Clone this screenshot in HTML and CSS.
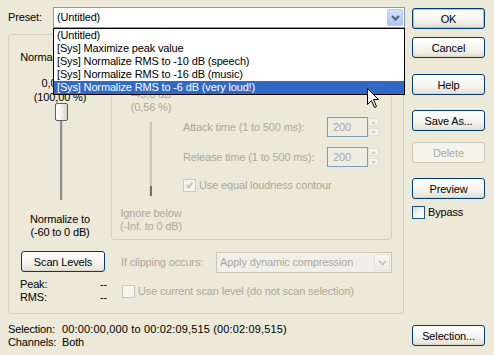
FILE: index.html
```html
<!DOCTYPE html>
<html>
<head>
<meta charset="utf-8">
<link rel="stylesheet" href="styles.css">
</head>
<body>
<div class="dialog">
  <div class="main">
    <div class="preset-row">
      <span class="preset-label">Preset:</span>
      <div class="combo-wrap">
        <div class="combo">
          <span class="combo-text">(Untitled)</span>
          <span class="drop-btn"><svg width="9" height="6" viewBox="0 0 9 6"><path d="M1 1 L4.5 4.5 L8 1" fill="none" stroke="#4D6185" stroke-width="2"/></svg></span>
        </div>
        <ul class="droplist">
          <li>(Untitled)</li>
          <li>[Sys] Maximize peak value</li>
          <li>[Sys] Normalize RMS to -10 dB (speech)</li>
          <li>[Sys] Normalize RMS to -16 dB (music)</li>
          <li class="sel">[Sys] Normalize RMS to -6 dB (very loud!)</li>
        </ul>
      </div>
    </div>

    <div class="group outer">
      <div class="left-col">
        <div class="lbl l-using">Normalize using:</div>
        <div class="lbl l-db">0,00 dB</div>
        <div class="lbl l-pct">(100,00 %)</div>
        <div class="vslider">
          <div class="thumb"></div>
          <div class="track"></div>
        </div>
        <div class="lbl l-to">Normalize to</div>
        <div class="lbl">(-60 to 0 dB)</div>
      </div>

      <div class="group inner">
        <div class="inner-left">
          <div class="lbl dis l-ign-db">-45,0 dB</div>
          <div class="lbl dis">(0,56 %)</div>
          <div class="dslider"><div class="dthumb"></div></div>
          <div class="lbl dis l-ignore">Ignore below</div>
          <div class="lbl dis">(-Inf. to 0 dB)</div>
        </div>
        <div class="inner-right">
          <div class="field-row attack">
            <span class="field-label dis">Attack time (1 to 500 ms):</span>
            <span class="input dis">200</span>
            <span class="spin"><span class="spin-up"><svg width="5" height="3" viewBox="0 0 5 3"><path d="M0 3 L2.5 0 L5 3 Z" fill="#CFCDC2"/></svg></span><span class="spin-down"><svg width="5" height="3" viewBox="0 0 5 3"><path d="M0 0 L2.5 3 L5 0 Z" fill="#CFCDC2"/></svg></span></span>
          </div>
          <div class="field-row release">
            <span class="field-label dis">Release time (1 to 500 ms):</span>
            <span class="input dis">200</span>
            <span class="spin"><span class="spin-up"><svg width="5" height="3" viewBox="0 0 5 3"><path d="M0 3 L2.5 0 L5 3 Z" fill="#CFCDC2"/></svg></span><span class="spin-down"><svg width="5" height="3" viewBox="0 0 5 3"><path d="M0 0 L2.5 3 L5 0 Z" fill="#CFCDC2"/></svg></span></span>
          </div>
          <div class="check-row loud">
            <span class="cb cb-dis"><svg width="11" height="11" viewBox="0 0 11 11"><path d="M2.5 5 L4.5 7.5 L8.5 2.5" fill="none" stroke="#C4C2B6" stroke-width="2"/></svg></span>
            <span class="dis">Use equal loudness contour</span>
          </div>
        </div>
      </div>

      <div class="scan-col">
        <button class="btn scan">Scan Levels</button>
        <div class="levels">
          <span>Peak:</span><span>--</span>
          <span>RMS:</span><span>--</span>
        </div>
      </div>

      <div class="clip-col">
        <div class="clip-row">
          <span class="clip-label dis">If clipping occurs:</span>
          <div class="combo combo-dis">
            <span class="combo-text dis">Apply dynamic compression</span>
            <span class="drop-btn drop-dis"><svg width="9" height="6" viewBox="0 0 9 6"><path d="M1 1 L4.5 4.5 L8 1" fill="none" stroke="#C9C7BA" stroke-width="2"/></svg></span>
          </div>
        </div>
        <div class="check-row scanlvl">
          <span class="cb cb-dis"></span>
          <span class="dis">Use current scan level (do not scan selection)</span>
        </div>
      </div>
    </div>

    <div class="info">
      <div class="info-row"><span class="info-k">Selection:</span><span class="tc">00:00:00,000 to 00:02:09,515 (00:02:09,515)</span></div>
      <div class="info-row"><span class="info-k">Channels:</span><span>Both</span></div>
    </div>
  </div>

  <div class="side">
    <button class="btn ok">OK</button>
    <button class="btn cancel">Cancel</button>
    <button class="btn help">Help</button>
    <button class="btn saveas">Save As...</button>
    <button class="btn delete" disabled>Delete</button>
    <button class="btn preview">Preview</button>
    <div class="bypass"><span class="cb cb-on"></span><span>Bypass</span></div>
    <button class="btn selection">Selection...</button>
  </div>
</div>

<svg class="cursor" width="13" height="21" viewBox="0 0 13 21">
  <path d="M0.5 0.5 L0.5 16.5 L4.5 12.5 L7.5 19.5 L9.5 18.5 L6.5 11.5 L11.5 11.5 Z" fill="#fff" stroke="#000" stroke-width="1" stroke-linejoin="miter"/>
</svg>
</body>
</html>
```

FILE: styles.css
```css
html, body {
  margin: 0;
  padding: 0;
}
body {
  background: #ECE9D8;
  font-family: "Liberation Sans", Arial, sans-serif;
  font-size: 11px;
  line-height: 13px;
  color: #000;
  letter-spacing: -0.15px;
  width: 494px;
  height: 355px;
  overflow: hidden;
}
.dis { color: #ACA899; }

.dialog {
  display: grid;
  grid-template-columns: 396px 73px;
  column-gap: 8px;
  padding: 7px 0 0 8px;
  height: 355px;
  box-sizing: border-box;
}
.main {
  display: flex;
  flex-direction: column;
}

/* preset row */
.preset-row {
  display: flex;
  align-items: center;
  height: 21px;
}
.preset-label { width: 45px; flex: none; }
.combo-wrap {
  position: relative;
  width: 352px;
  flex: none;
}
.combo {
  display: flex;
  align-items: center;
  height: 21px;
  box-sizing: border-box;
  border: 1px solid #7F9DB9;
  background: #fff;
}
.combo-text {
  padding-left: 3px;
  white-space: nowrap;
  overflow: hidden;
}
.drop-btn {
  margin-left: auto;
  margin-right: 1px;
  width: 16px;
  height: 17px;
  box-sizing: border-box;
  border: 1px solid #B7C8F0;
  border-radius: 2px;
  background: linear-gradient(180deg, #D2DEFB 0%, #C1D2F8 50%, #B1C5F4 100%);
  display: flex;
  align-items: center;
  justify-content: center;
  flex: none;
}
.droplist {
  position: absolute;
  left: 0;
  top: 21px;
  width: 352px;
  box-sizing: border-box;
  margin: 0;
  padding: 0;
  list-style: none;
  border: 1px solid #000;
  background: #fff;
  z-index: 5;
}
.droplist li {
  height: 13px;
  line-height: 13px;
  padding-left: 3px;
  white-space: nowrap;
}
.droplist li.sel {
  background: #316AC5;
  color: #fff;
}

/* group boxes */
.group {
  border: 1px solid #D0D0BF;
  border-radius: 3px;
  box-sizing: border-box;
}
.outer {
  margin-top: 6px;
  height: 280px;
  display: grid;
  grid-template-columns: 102px 281px;
  grid-template-rows: 200px auto;
  padding-top: 5px;
}
.left-col {
  display: flex;
  flex-direction: column;
  align-items: center;
  text-align: center;
  white-space: nowrap;
}
.lbl { white-space: nowrap; height: 13px; }
.l-using { margin-top: 11px; }
.l-db { margin-top: 13px; }
.l-pct { margin-top: 1px; }
.vslider {
  margin-top: -1px;
  margin-left: 2px;
  display: flex;
  flex-direction: column;
  align-items: center;
}
.thumb {
  width: 13px;
  height: 18px;
  box-sizing: border-box;
  border: 1px solid #5E5E5E;
  border-radius: 2px;
  background: linear-gradient(90deg, #FFFFFF 0%, #F2F2EE 50%, #D5D5CE 100%);
}
.track {
  width: 2px;
  height: 79px;
  background: #8E8E8E;
  border-right: 1px solid #D8D6CC;
  box-sizing: content-box;
  margin-left: 1px;
}
.l-to { margin-top: 13px; }

/* inner box */
.inner {
  height: 200px;
  display: flex;
}
.inner-left {
  width: 78px;
  flex: none;
  display: flex;
  flex-direction: column;
  align-items: center;
}
.l-ign-db { margin-top: 47px; }
.dslider {
  margin-top: 8px;
  width: 2px;
  height: 74px;
  background: #C8C6BA;
  border-left: 1px solid #DEDCD2;
  display: flex;
  flex-direction: column;
  justify-content: flex-end;
  margin-left: -1px;
}
.dthumb {
  width: 2px;
  height: 10px;
  background: #707070;
}
.l-ignore { margin-top: 11px; }
.inner-right {
  margin-left: -7px;
  padding-top: 76px;
  display: flex;
  flex-direction: column;
}
.field-row {
  display: flex;
  align-items: center;
  height: 20px;
}
.release { margin-top: 10px; }
.field-label { width: 144px; white-space: nowrap; }
.input {
  width: 41px;
  height: 20px;
  box-sizing: border-box;
  border: 1px solid #7F9DB9;
  background: #EEEDE4;
  padding-left: 5px;
  line-height: 18px;
}
.spin {
  width: 11px;
  height: 20px;
  display: flex;
  flex-direction: column;
  justify-content: space-between;
  padding: 1px 0;
  box-sizing: border-box;
}
.spin-up, .spin-down {
  height: 8px;
  box-sizing: border-box;
  border: 1px solid #E2E0D6;
  background: #F4F3EE;
  display: flex;
  align-items: center;
  justify-content: center;
}
.check-row {
  display: flex;
  align-items: center;
  height: 13px;
  white-space: nowrap;
}
.loud { margin-top: 12px; }
.cb {
  width: 13px;
  height: 13px;
  box-sizing: border-box;
  flex: none;
  margin-right: 3px;
  display: flex;
  align-items: center;
  justify-content: center;
}
.cb-dis {
  border: 1px solid #CAC8BB;
  background: #F5F4EE;
}
.cb-on {
  border: 1px solid #1C5180;
  background: linear-gradient(135deg, #DCDCD7 0%, #F4F4F0 60%, #FFFFFF 100%);
}

/* bottom part of outer group */
.scan-col {
  padding-left: 12px;
  display: flex;
  flex-direction: column;
  align-items: flex-start;
}
.levels {
  margin-top: 6px;
  margin-left: -1px;
  display: grid;
  grid-template-columns: 80px auto;
}
.clip-col {
  padding-left: 10px;
  display: flex;
  flex-direction: column;
}
.clip-row {
  margin-top: 12px;
  display: flex;
  align-items: center;
  height: 21px;
}
.clip-label { width: 95px; white-space: nowrap; flex: none; }
.combo-dis {
  width: 176px;
  flex: none;
  border-color: #C9C7BA;
  background: #F0EFE8;
}
.drop-dis {
  border-color: #E4E2D8;
  background: linear-gradient(180deg, #F7F6F1 0%, #EEEDE6 100%);
}
.scanlvl { margin-top: 12px; margin-left: 1px; }

/* info */
.info { margin-top: 9px; }
.info-row { display: flex; height: 13px; white-space: nowrap; }
.info-k { width: 54px; flex: none; }
.tc { letter-spacing: 0.15px; }

/* buttons */
.btn {
  font-family: inherit;
  font-size: 11px;
  letter-spacing: -0.15px;
  color: #000;
  height: 21px;
  padding: 0;
  border: 1px solid #003C74;
  border-radius: 3px;
  background: linear-gradient(180deg, #FFFFFF 0%, #F5F4EF 55%, #E8E6DB 90%, #D8D2C2 100%);
  box-sizing: border-box;
  flex: none;
}
.btn:disabled {
  color: #ACA899;
  border-color: #C9C7BA;
  background: #F5F4EA;
}
.side {
  display: flex;
  flex-direction: column;
}
.ok { margin-top: 1px; box-shadow: inset 0 0 0 1px #A8BEEB; }
.cancel { margin-top: 8px; }
.help { margin-top: 16px; }
.saveas { margin-top: 15px; }
.delete { margin-top: 11px; }
.preview { margin-top: 15px; }
.bypass {
  margin-top: 7px;
  display: flex;
  align-items: center;
  height: 13px;
}
.selection { margin-top: auto; margin-bottom: 9px; }
.scan { width: 84px; margin-top: 11px; margin-left: 0; }

.cursor {
  position: absolute;
  left: 367px;
  top: 88px;
  z-index: 10;
}
```
